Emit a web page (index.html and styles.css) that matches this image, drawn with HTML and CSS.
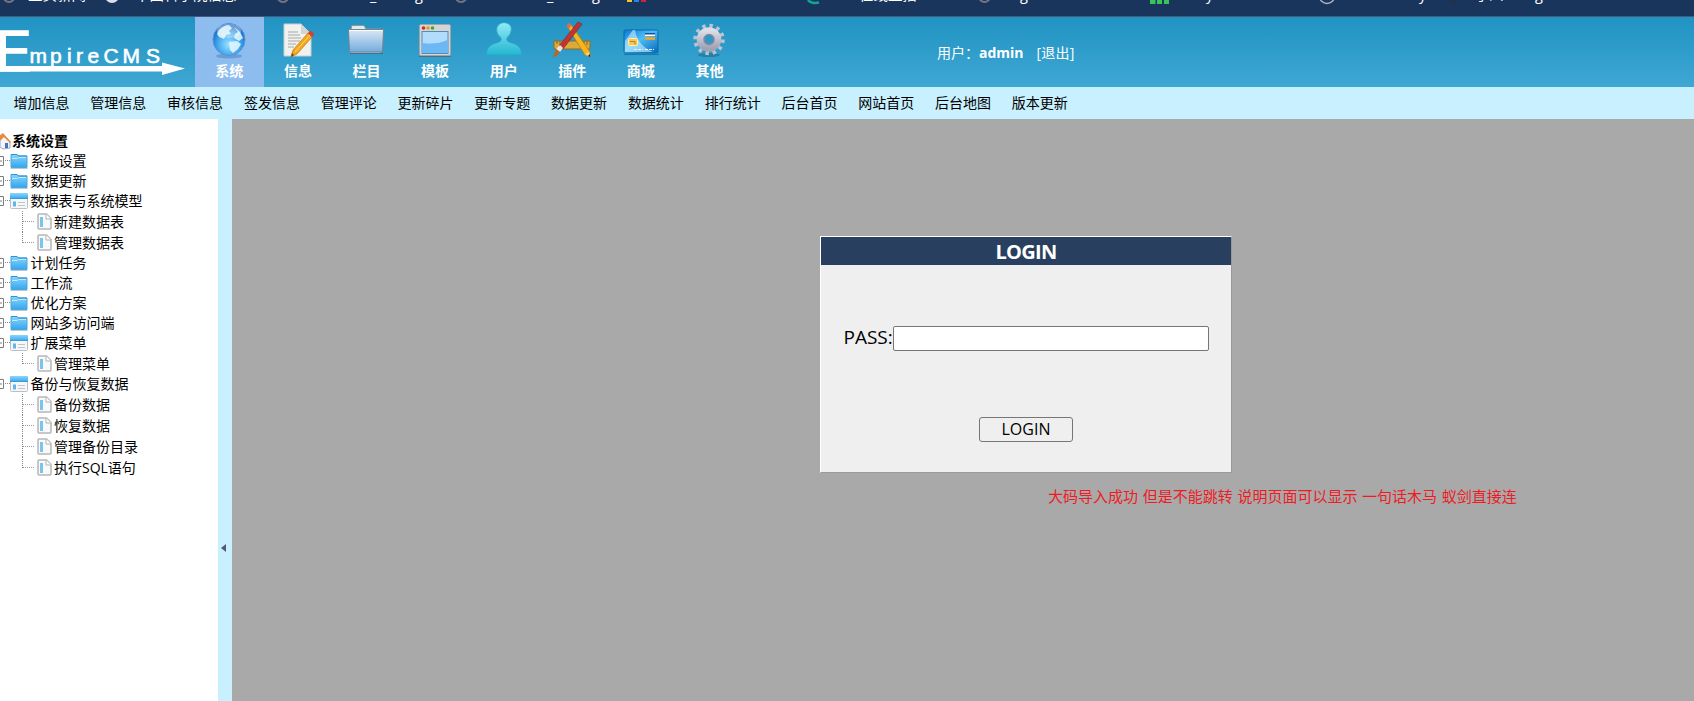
FILE: index.html
```html
<!DOCTYPE html>
<html lang="zh-CN">
<head>
<meta charset="utf-8">
<title>EmpireCMS</title>
<link rel="stylesheet" href="styles.css">
</head>
<body>
<svg class="defs" width="0" height="0" aria-hidden="true">
  <defs>
    <linearGradient id="gFolder" x1="0" y1="0" x2="0" y2="1"><stop offset="0" stop-color="#8ad6fc"/><stop offset="1" stop-color="#35a5ee"/></linearGradient>
    <linearGradient id="gBig" x1="0" y1="0" x2="0" y2="1"><stop offset="0" stop-color="#dce9f5"/><stop offset="1" stop-color="#72abdf"/></linearGradient>
    <radialGradient id="gGlobe" cx=".5" cy=".65" r=".6"><stop offset="0" stop-color="#9fe4ff"/><stop offset=".6" stop-color="#3ea6ec"/><stop offset="1" stop-color="#1464c4"/></radialGradient>
    <linearGradient id="gUser" x1="0" y1="0" x2="0" y2="1"><stop offset="0" stop-color="#90eaf8"/><stop offset="1" stop-color="#23b7d2"/></linearGradient>
    <linearGradient id="gCard" x1="0" y1="0" x2="1" y2="1"><stop offset="0" stop-color="#0b7ad8"/><stop offset=".45" stop-color="#4dbdf5"/><stop offset="1" stop-color="#0868bd"/></linearGradient>
    <linearGradient id="gGear" x1="0" y1="0" x2="0" y2="1"><stop offset="0" stop-color="#dcdde6"/><stop offset="1" stop-color="#a0a3b6"/></linearGradient>
    <symbol id="folder" viewBox="0 0 18 16"><path d="M1 1.500h6l1.500 1.500h8.500v11.500H1z" fill="url(#gFolder)" stroke="#4fa6da"/><path d="M1 1.500h6l1.500 1.500h8.500" fill="none" stroke="#2f93d2"/><path d="M2 5.500h5.500l1-1h7.500" fill="none" stroke="#c0eaff"/><path d="M.5 15.500h17" stroke="#b9c9d4"/></symbol>
    <symbol id="panel" viewBox="0 0 18 16"><rect x=".5" y=".5" width="17" height="15" rx="1" fill="#f5f7f8" stroke="#b9c0c5"/><path d="M0 1q0-1 1-1h16q1 0 1 1v5H0z" fill="url(#gFolder)"/><path d="M0 5.500h18" stroke="#379bdc"/><path d="M3 8.500h3v5H3z" fill="#60b6ec"/><path d="M8 9.500h7M8 12.500h7" stroke="#c0c4c8"/></symbol>
    <symbol id="page" viewBox="0 0 15 17"><path d="M2 1h7.500L14 5.500V15q0 1-1 1H2q-1 0-1-1V2q0-1 1-1z" fill="#f8f9fa" stroke="#b6b6b6" stroke-width="1.500"/><path d="M9 1v5h5" fill="#fff" stroke="#b3b3b3"/><path d="M3 4h3v10H3z" fill="#7cc4ec"/></symbol>
    <symbol id="minus" viewBox="0 0 11 12"><path d="M0 1.500h3.500v9H0M0 6h2" fill="none" stroke="#7d7d7d"/><path d="M5 5.500h6" stroke="#888" stroke-dasharray="1 1"/></symbol>
  </defs>
</svg>

<svg class="bookmarks" viewBox="0 0 1694 16">
  <g fill="none" stroke="#737780" stroke-width="2"><circle cx="9" cy="-3.500" r="5.500"/><circle cx="283" cy="-3.500" r="5.500"/><circle cx="461" cy="-3.500" r="5.500"/><circle cx="984.500" cy="-3.500" r="5.500"/></g>
  <circle cx="112" cy="-4" r="7" fill="#dcdde8"/>
  <circle cx="1327" cy="-4" r="7.500" fill="none" stroke="#aab3c4" stroke-width="1.500"/>
  <g fill="#fff"><text x="28" y="0">主页新闻</text><text x="135" y="0">中国科学院信息</text><text x="370" y="1">_</text><text x="415" y="0">g</text><text x="547" y="1">_</text><text x="592" y="0">g</text><text x="859" y="0">在线直播</text><text x="1020" y="0">g</text><text x="1039" y="0">//</text><text x="1206" y="0">y</text><text x="1419" y="0">y</text><text x="1475" y="0">小川</text><text x="1535" y="0">g</text></g>
  <path d="M627 0h5v2h-5z" fill="#f6c52c"/><path d="M634 0h5v2h-5z" fill="#2583e5"/><path d="M641 0h5v2h-5z" fill="#d32339"/>
  <path d="M808 0q3 4 11 2.500" fill="none" stroke="#11a497" stroke-width="2.500"/>
  <path d="M1150 0h5.500v4h-5.500zM1157 0h5v4h-5zM1164 0h5v4h-5z" fill="#36c45b"/>
  <path d="M1450 0l5 3V0z" fill="#2a2e3b"/>
</svg>

<header class="top">
  <svg class="logo" viewBox="0 17 195 70">
    <text class="logo-e" x="-4" y="70.500" textLength="35.500" lengthAdjust="spacingAndGlyphs">E</text>
    <text class="logo-text" x="29.500 50 67 76 87.500 103.500 122.500 146" y="62.500">mpireCMS</text>
    <path d="M0 66h162v-3.500l23 6-23 6.500v-3.500H0z" fill="#fff"/>
  </svg>
  <nav class="modules">
    <a class="module active"><svg viewBox="0 0 40 40"><ellipse cx="20" cy="35" rx="13" ry="2.500" fill="#376fae" opacity=".4"/><circle cx="20" cy="18.500" r="16" fill="url(#gGlobe)" stroke="#5b91d3"/><path d="M10 9q5-5 10-5l3 3-3 3 2 3-5 1-2 4-5-2-2-3zM25 6l6 5 3 6-4 3-5-3 1-4 3-2zM20 21l8-1 4 3-3 5-5 4-3-3z" fill="#e5f8ff" opacity=".85"/><ellipse cx="20" cy="10" rx="12" ry="7" fill="#fff" opacity=".35"/></svg>系统</a>
    <a class="module"><svg viewBox="0 0 40 40"><path d="M6 3h17l10 10v22H6z" fill="#f1f1ef" stroke="#c9cccd"/><path d="M23 3v10h10z" fill="#d3d5d5"/><path d="M10 11h10M10 14h12M10 17h13M10 20h12M10 23h8M10 26h6" stroke="#a5a8a9"/><path d="M13 36l2-7 15-17 4 4-15 17z" fill="#f5a61c" stroke="#bc7610" stroke-width=".7"/><path d="M17 31l15-17" stroke="#ffe06a"/><path d="M30 12l2-2q3 0 4 4l-2 2z" fill="#d93b36"/><path d="M13 36l1-4 2 2z" fill="#584638"/></svg>信息</a>
    <a class="module"><svg viewBox="0 0 40 40"><path d="M5 8l1-3.500h12l2 3.500h15v24H4z" fill="#e4e9ec" stroke="#8b979f"/><path d="M2.500 8.500h35l-1 22.500h-33z" fill="url(#gBig)" stroke="#77828b"/><path d="M3 9.500h34" stroke="#f7fbff"/><path d="M4 32.500h33" stroke="#275c85" opacity=".6"/></svg>栏目</a>
    <a class="module"><svg viewBox="0 0 40 40"><rect x="4.500" y="3.500" width="31" height="31" rx="1.500" fill="#d4d5d7" stroke="#a1a4a8"/><rect x="7" y="10.500" width="26" height="22" fill="#b2dcfb" stroke="#548db8"/><path d="M7.500 22q14 2 25-3v13h-25z" fill="#6cb8f5"/><circle cx="8.500" cy="7" r="1.800" fill="#db261e"/><circle cx="13" cy="7" r="1.800" fill="#e99d16"/><circle cx="17.500" cy="7" r="1.800" fill="#42a821"/><path d="M4 35.500h32" stroke="#536b7b"/></svg>模板</a>
    <a class="module"><svg viewBox="0 0 40 40"><path d="M2.500 34q-.5-8 6.500-11l6-2q3-1 2-4-5-4-4.500-9 1-6 7.500-6.500Q27 2 27.500 8q0 5-4.500 9-1 3 2 4l6 2q7 3 6.500 11z" fill="url(#gUser)" stroke="#29a7c3"/></svg>用户</a>
    <a class="module"><svg viewBox="0 0 40 40"><path d="M2 20h36v8H2z" fill="#ddaa38" stroke="#8c6c2d"/><path d="M5 20v3M8 20v4M11 20v3M14 20v4M26 20v3M29 20v4M32 20v3M35 20v4" stroke="#826321"/><path d="M15 5l3.500-2 19.500 28v5l-5-2z" fill="#f7b51c" stroke="#b17b17" stroke-width=".7"/><path d="M14.500 5l2-3 3 2-2.500 4z" fill="#df695c"/><path d="M33 33l5 3-1-5z" fill="#f1d39a"/><path d="M36 35l2 1v-3z" fill="#222"/><path d="M26 1l4 2-19 25-4-3z" fill="#bf3537" stroke="#7d2020" stroke-width=".6"/><path d="M8 24l3 3-3 4-4-3z" fill="#e6e4e2"/><path d="M4 28l4 3-3 4-4 1z" fill="#b06c26"/></svg>插件</a>
    <a class="module"><svg viewBox="0 0 40 40"><rect x="3" y="9" width="34" height="23" rx="1.500" fill="url(#gCard)" stroke="#0868ad"/><path d="M4 31V20L12 9h2q2 15 18 22z" fill="#d9f5ff" opacity=".55"/><path d="M24 12h10v3H24z" fill="#fff"/><path d="M24 16h10v3H24z" fill="#e8a42e"/><path d="M24 12h10v1.500H24z" fill="#18519d"/><rect x="7.500" y="17.500" width="9" height="7" rx="1" fill="#f7c752" stroke="#fff0b2"/><path d="M9 20.500h5v3" stroke="#b78324" fill="none"/><path d="M13 28.500h9M24 28.500h9" stroke="#e2f4ff" stroke-dasharray="3 1"/><path d="M3 33.500h35" stroke="#0c507e" opacity=".5"/></svg>商城</a>
    <a class="module"><svg viewBox="0 0 40 40"><ellipse cx="20" cy="34" rx="11" ry="2" fill="#235d7c" opacity=".5"/><circle cx="20" cy="18.500" r="13.500" fill="none" stroke="#c0c2cf" stroke-width="4.500" stroke-dasharray="3.300 3.770"/><circle cx="20" cy="18.500" r="8.500" fill="none" stroke="url(#gGear)" stroke-width="7.500"/><circle cx="20" cy="18.500" r="5" fill="none" stroke="#8587a0" stroke-width="1.500"/></svg>其他</a>
  </nav>
  <div class="user"><span>用户：</span><b>admin</b><a>[退出]</a></div>
</header>

<nav class="quick"><a>增加信息</a><a>管理信息</a><a>审核信息</a><a>签发信息</a><a>管理评论</a><a>更新碎片</a><a>更新专题</a><a>数据更新</a><a>数据统计</a><a>排行统计</a><a>后台首页</a><a>网站首页</a><a>后台地图</a><a>版本更新</a></nav>

<main class="body">
  <aside class="tree">
    <div class="root"><svg viewBox="0 0 12 18"><path d="M0 8l4-5 6 7v6l-7 1-3-2z" fill="#f1f4fb" stroke="#9da8ce"/><path d="M-1 4l4-3 8 9-1 1-6-6-5 5z" fill="#e68b3f"/><path d="M5 11h3v5H5z" fill="#526fba"/></svg>系统设置</div>
    <div class="row"><svg class="tog"><use href="#minus"/></svg><svg class="ico"><use href="#folder"/></svg>系统设置</div>
    <div class="row"><svg class="tog"><use href="#minus"/></svg><svg class="ico"><use href="#folder"/></svg>数据更新</div>
    <div class="row"><svg class="tog"><use href="#minus"/></svg><svg class="ico"><use href="#panel"/></svg>数据表与系统模型</div>
    <div class="leaf"><i></i><svg><use href="#page"/></svg>新建数据表</div>
    <div class="leaf last"><i></i><svg><use href="#page"/></svg>管理数据表</div>
    <div class="row"><svg class="tog"><use href="#minus"/></svg><svg class="ico"><use href="#folder"/></svg>计划任务</div>
    <div class="row"><svg class="tog"><use href="#minus"/></svg><svg class="ico"><use href="#folder"/></svg>工作流</div>
    <div class="row"><svg class="tog"><use href="#minus"/></svg><svg class="ico"><use href="#folder"/></svg>优化方案</div>
    <div class="row"><svg class="tog"><use href="#minus"/></svg><svg class="ico"><use href="#folder"/></svg>网站多访问端</div>
    <div class="row"><svg class="tog"><use href="#minus"/></svg><svg class="ico"><use href="#panel"/></svg>扩展菜单</div>
    <div class="leaf last"><i></i><svg><use href="#page"/></svg>管理菜单</div>
    <div class="row"><svg class="tog"><use href="#minus"/></svg><svg class="ico"><use href="#panel"/></svg>备份与恢复数据</div>
    <div class="leaf"><i></i><svg><use href="#page"/></svg>备份数据</div>
    <div class="leaf"><i></i><svg><use href="#page"/></svg>恢复数据</div>
    <div class="leaf"><i></i><svg><use href="#page"/></svg>管理备份目录</div>
    <div class="leaf last"><i></i><svg><use href="#page"/></svg>执行SQL语句</div>
  </aside>
  <div class="splitter"><svg viewBox="0 0 5 8"><path d="M5 0v8L0 4z" fill="#555a68"/></svg></div>
  <section class="content">
    <form class="login">
      <h1>LOGIN</h1>
      <label class="pass"><span>PASS:</span><input type="password"></label>
      <button type="button">LOGIN</button>
    </form>
    <p class="note">大码导入成功 但是不能跳转 说明页面可以显示 一句话木马 蚁剑直接连</p>
  </section>
</main>
</body>
</html>
```
FILE: styles.css
```css
* { box-sizing: border-box; }
body {
  margin: 0;
  height: 701px;
  overflow: hidden;
  display: flex;
  flex-direction: column;
  font: 14px/20px "Open Sans", "Noto Sans CJK SC", sans-serif;
  color: #000;
}
.defs { position: absolute; }
.bookmarks {
  display: block;
  flex: none;
  width: 1694px;
  height: 17px;
  background: #1a355c;
  border-bottom: 1px solid #46587a;
  font-size: 14.5px;
}
.top {
  flex: none;
  height: 70px;
  display: flex;
  color: #fff;
  background: linear-gradient(#2093c2, #3fa7d4);
}
.logo { width: 195px; height: 70px; flex: none; }
.logo-e { font: 57px "Liberation Sans", sans-serif; fill: #fff; stroke: #fff; stroke-width: 1.3px; }
.logo-text { font: 21px "Liberation Sans", sans-serif; fill: #fff; stroke: #fff; stroke-width: .6px; }
.modules { display: flex; width: 550px; }
.module {
  width: 68.6px;
  display: flex;
  flex-direction: column;
  align-items: center;
  padding-top: 4px;
  font-weight: bold;
  line-height: 20px;
}
.module svg { width: 40px; height: 40px; }
.active { background: #8dbcee; }
.user { margin-left: 192px; padding-top: 26px; display: flex; }
.user b { font-weight: 700; }
.user a { margin-left: 13px; letter-spacing: .2px; }
.quick {
  flex: none;
  height: 32px;
  padding: 6px 0 0 13.5px;
  display: flex;
  gap: 20.8px;
  background: #c8f0ff;
}
.body { flex: 1; display: flex; min-height: 0; }
.tree { width: 218px; padding-top: 11px; background: #fff; flex: none; white-space: nowrap; }
.root { display: flex; align-items: center; height: 21px; font-weight: bold; }
.root svg { width: 12px; height: 18px; }
.row { display: flex; align-items: center; height: 20px; }
.tog { width: 11px; height: 12px; margin-right: -1px; }
.ico { width: 18px; height: 16px; margin-right: 2.5px; }
.leaf { display: flex; align-items: center; height: 21px; padding-left: 22px; }
.leaf i { width: 13px; height: 21px; margin-right: 2px; border-left: 1px dotted #888; background: repeating-linear-gradient(90deg, #999 0 1px, transparent 1px 2px) 0 10px / 100% 1px no-repeat; }
.leaf.last i { height: 11px; align-self: flex-start; }
.leaf svg { width: 15px; height: 17px; margin-right: 2px; }
.splitter { width: 14px; flex: none; background: #c8f0ff; padding: 425px 0 0 3px; }
.splitter svg { display: block; width: 5px; height: 8px; }
.content { flex: 1; background: #a9a9a9; padding: 117px 0 0 588px; }
.login {
  width: 412px;
  height: 237px;
  background: #efefef;
  border: 1px solid;
  border-color: #fff #999 #999 #fff;
  display: flex;
  flex-direction: column;
  align-items: center;
}
.login h1 { margin: 0; width: 100%; height: 28px; background: #293f60; color: #fff; font: bold 20px/29px "Open Sans", sans-serif; letter-spacing: -.7px; text-align: center; }
.pass { display: flex; align-items: center; margin-top: 61px; font-size: 19px; }
.pass span { width: 49px; height: 23px; line-height: 20px; }
.pass input { width: 316px; height: 25px; border: 1px solid #767676; border-radius: 2px; background: #fff; padding: 0; }
.login button { width: 94px; height: 25px; margin-top: 66px; padding: 0 0 1px; border: 1px solid #767676; border-radius: 3px; background: #efefef; color: #000; font: 16px/22px "Open Sans", sans-serif; }
.note { margin: 13px 0 0 228px; font-size: 15px; line-height: 20px; word-spacing: .8px; color: #ed1c24; white-space: nowrap; }
```
